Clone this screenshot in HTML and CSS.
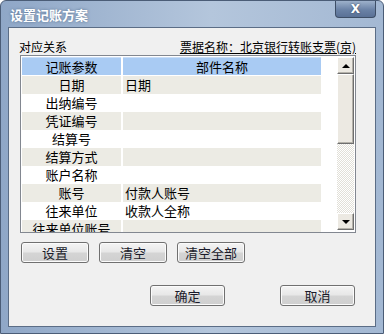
FILE: index.html
```html
<!DOCTYPE html>
<html lang="zh-CN">
<head>
    <meta charset="UTF-8">
    <title>设置记账方案</title>
    <link rel="stylesheet" href="styles.css">
</head>
<body>
    <div class="window">
        <div class="titlebar">
            <span class="title">设置记账方案</span>
            <button class="close" type="button">X</button>
        </div>
        <div class="client">
            <div class="info">
                <span>对应关系</span>
                <span class="bill">票据名称：北京银行转账支票(京)</span>
            </div>

            <div class="listbox">
                <div class="grid">
                    <div class="row head">
                        <div class="c1">记账参数</div>
                        <div class="c2 center">部件名称</div>
                    </div>
                    <div class="row alt"><div class="c1">日期</div><div class="c2">日期</div></div>
                    <div class="row"><div class="c1">出纳编号</div><div class="c2"></div></div>
                    <div class="row alt"><div class="c1">凭证编号</div><div class="c2"></div></div>
                    <div class="row"><div class="c1">结算号</div><div class="c2"></div></div>
                    <div class="row alt"><div class="c1">结算方式</div><div class="c2"></div></div>
                    <div class="row"><div class="c1">账户名称</div><div class="c2"></div></div>
                    <div class="row alt"><div class="c1">账号</div><div class="c2">付款人账号</div></div>
                    <div class="row"><div class="c1">往来单位</div><div class="c2">收款人全称</div></div>
                    <div class="row alt"><div class="c1">往来单位账号</div><div class="c2"></div></div>
                </div>
                <div class="scrollbar">
                    <div class="sbtn"><span class="arrow up"></span></div>
                    <div class="thumb"></div>
                    <div class="track"></div>
                    <div class="sbtn"><span class="arrow down"></span></div>
                </div>
            </div>

            <div class="actions">
                <button class="btn" type="button">设置</button>
                <button class="btn" type="button">清空</button>
                <button class="btn" type="button">清空全部</button>
            </div>

            <div class="footer">
                <button class="btn wide" type="button">确定</button>
                <button class="btn wide" type="button">取消</button>
            </div>
        </div>
    </div>
</body>
</html>
```

FILE: styles.css
```css
body {
    margin: 0;
    padding: 0;
    background: #ffffff;
    font-family: "Noto Sans CJK SC", "Liberation Sans", sans-serif;
}

.window {
    width: 384px;
    height: 334px;
    box-sizing: border-box;
    display: flex;
    flex-direction: column;
    background: linear-gradient(to right, #8fa7c7, #b4c6dc 55%, #a3b8d3);
    border: 1px solid #4b5d77;
    border-radius: 6px 6px 0 0;
}

.titlebar {
    height: 26px;
    display: flex;
    justify-content: space-between;
    align-items: flex-start;
    padding: 0 7px 0 9px;
}

.title {
    margin-top: 5px;
    color: #fff;
    font-size: 13px;
    font-weight: bold;
    line-height: 17px;
    text-shadow: 0 0 3px #56708f;
}

.close {
    width: 41px;
    height: 17px;
    padding: 0;
    border: 1px solid #3d4e66;
    border-top: none;
    border-radius: 0 0 4px 4px;
    background: linear-gradient(#9db1cb, #6a82a6 55%, #5a7196);
    color: #fff;
    font-family: "DejaVu Sans", sans-serif;
    font-size: 12px;
    font-weight: bold;
    line-height: 15px;
    text-shadow: 0 0 2px #2f3e55;
}

.client {
    flex: 1;
    margin: 0 7px 6px 7px;
    padding: 11px 19px 0 11px;
    background: #f0f0f0;
    border: 1px solid #5b6d86;
    font-size: 12px;
    color: #000;
}

.info {
    height: 16px;
    display: flex;
    justify-content: space-between;
    align-items: center;
    line-height: 16px;
}

.info span:first-child {
    margin-left: -1px;
}

.bill {
    text-decoration: underline;
}

.listbox {
    height: 176px;
    display: flex;
    border: 1px solid #828790;
    background: #fff;
}

.grid {
    flex: 1;
    overflow: hidden;
    padding: 1px 0 0 1px;
    font-size: 13px;
}

.row {
    display: grid;
    grid-template-columns: 99px 198px;
    column-gap: 2px;
    height: 18px;
    line-height: 18px;
    white-space: nowrap;
}

.row.head {
    margin-bottom: 1px;
}

.row.head .c1,
.row.head .c2 {
    background: #a9cbf3;
    border-top: 1px solid #c9def8;
    line-height: 17px;
}

.row.alt .c1,
.row.alt .c2 {
    background: #ecebe4;
}

.c1 {
    text-align: center;
    overflow: visible;
}

.c2 {
    padding-left: 2px;
}

.c2.center {
    padding-left: 0;
    text-align: center;
}

.scrollbar {
    width: 17px;
    display: flex;
    flex-direction: column;
    padding: 1px 1px 2px 0;
}

.sbtn,
.thumb {
    box-sizing: border-box;
    background: #ece9e2;
    border: 1px solid;
    border-color: #fff #6e6e6e #6e6e6e #fff;
    box-shadow: inset -1px -1px 0 #b5b2aa;
}

.sbtn {
    height: 17px;
    display: flex;
    align-items: center;
    justify-content: center;
}

.thumb {
    height: 70px;
}

.track {
    flex: 1;
    background: repeating-conic-gradient(#fff 0 25%, #e2e0d8 0 50%) 0 0 / 2px 2px;
}

.arrow {
    width: 0;
    height: 0;
    border-left: 4px solid transparent;
    border-right: 4px solid transparent;
}

.arrow.up {
    border-bottom: 4px solid #000;
}

.arrow.down {
    border-top: 4px solid #000;
}

.actions {
    display: flex;
    gap: 10px;
    margin: 9px 0 0 1px;
}

.btn {
    width: 68px;
    height: 21px;
    padding: 0;
    border: 1px solid #707070;
    border-radius: 3px;
    background: linear-gradient(#f4f4f4, #e8e8e8 45%, #d4d4d4 55%, #cfcfcf);
    box-shadow: inset 0 0 0 1px #fbfbfb;
    font-family: "Noto Sans CJK SC", sans-serif;
    font-size: 13px;
    line-height: 19px;
    color: #1a1a2a;
}

.footer {
    display: flex;
    justify-content: flex-end;
    gap: 55px;
    margin: 22px 1px 0 0;
}

.btn.wide {
    width: 75px;
}
```
